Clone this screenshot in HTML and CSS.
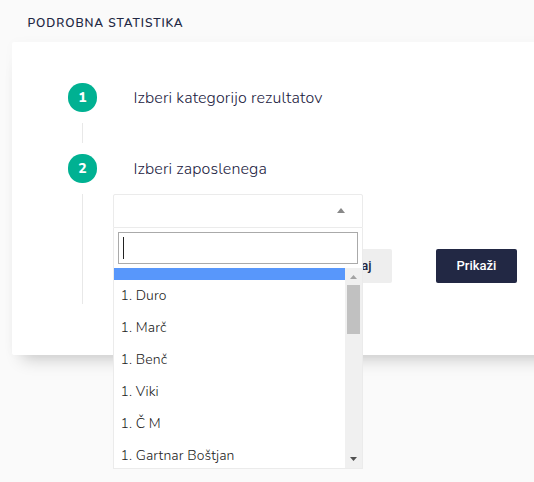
FILE: index.html
```html
<!DOCTYPE html>
<html lang="sl">
<head>
<meta charset="utf-8">
<title>Podrobna statistika</title>
<link rel="stylesheet" href="styles.css">
</head>
<body>
<h1 class="heading">PODROBNA STATISTIKA</h1>
<main class="card">
  <section class="step">
    <div class="rail"><span class="number">1</span><span class="line"></span></div>
    <h2 class="title">Izberi kategorijo rezultatov</h2>
  </section>
  <section class="step step-current">
    <div class="rail"><span class="number">2</span><span class="line"></span></div>
    <div class="content">
      <h2 class="title">Izberi zaposlenega</h2>
      <div class="select">
        <div class="selection"><svg class="arrow" width="8" height="5" viewBox="0 0 8 5"><path d="M4 0 8 5H0z" fill="#888"/></svg></div>
        <div class="dropdown">
          <div class="search"><span class="caret"></span></div>
          <div class="results">
            <ul class="options">
              <li class="option highlighted"></li>
              <li class="option">1. Duro</li>
              <li class="option">1. Marč</li>
              <li class="option">1. Benč</li>
              <li class="option">1. Viki</li>
              <li class="option">1. Č M</li>
              <li class="option">1. Gartnar Boštjan</li>
            </ul>
            <div class="scrollbar">
              <svg class="up" width="7" height="4" viewBox="0 0 7 4"><path d="M3.5 0 7 4H0z" fill="#a3a3a3"/></svg>
              <span class="thumb"></span>
              <svg class="down" width="7" height="4" viewBox="0 0 7 4"><path d="M0 0h7L3.5 4z" fill="#505050"/></svg>
            </div>
          </div>
        </div>
      </div>
      <div class="actions">
        <button class="button back">Nazaj</button>
        <button class="button show">Prikaži</button>
      </div>
    </div>
  </section>
</main>
</body>
</html>
```
FILE: styles.css
```css
* { box-sizing: border-box; }
body {
  margin: 0;
  height: 482px;
  overflow: hidden;
  background: #fafafa;
  color: #222844;
  font-family: "Nunito", "Lato", "Noto Sans", sans-serif;
}
.heading {
  margin: 0;
  height: 42px;
  padding: 15px 0 0 27.5px;
  font-size: 12px;
  line-height: 16px;
  font-weight: 600;
  letter-spacing: .92px;
  white-space: nowrap;
}
.card {
  width: 560px;
  height: 313px;
  margin-left: 12px;
  padding: 41px 0 0 56px;
  background: #fff;
  border-radius: 2px;
  box-shadow: 0 14px 16px -10px rgba(0, 0, 0, .2), 0 0 12px rgba(0, 0, 0, .025);
}
.step { display: flex; height: 71px; }
.step-current { height: 150px; }
.rail {
  width: 29px;
  margin-right: 16px;
  display: flex;
  flex-direction: column;
  align-items: center;
  gap: 11px;
  padding-bottom: 11px;
}
.step-current .rail { padding-bottom: 0; }
.number {
  width: 29px;
  height: 29px;
  flex: none;
  border-radius: 14px;
  background: #00b192;
  color: #fff;
  font-size: 14px;
  line-height: 29px;
  font-weight: 800;
  text-align: center;
}
.line { width: 1px; flex: 1; background: #e8e8e8; }
.title {
  margin: 0;
  height: 40px;
  padding-left: 20.5px;
  color: #1a2040;
  font-size: 16px;
  line-height: 30px;
  font-weight: 350;
  letter-spacing: .13px;
  white-space: nowrap;
}
.select { position: relative; width: 250px; }
.selection {
  height: 34px;
  border: 1px solid #ebebeb;
  border-radius: 2px 2px 0 0;
  background: #fff;
  display: flex;
  justify-content: flex-end;
  align-items: center;
  padding: 0 17px 1px 0;
}
.dropdown {
  position: absolute;
  z-index: 2;
  top: 34px;
  left: 0;
  width: 250px;
  height: 241px;
  padding-top: 4px;
  border: 1px solid #ebebeb;
  border-top: 0;
  background: #fff;
  color: #222;
}
.search {
  height: 32px;
  margin: 0 4px 4px;
  padding: 4px;
  border: 1px solid #aaa;
}
.caret { display: block; width: 1px; height: 22px; background: #222; }
.results { display: flex; height: 200px; }
.options { flex: 1; margin: 0; padding: 0; list-style: none; overflow: hidden; }
.option {
  height: 32px;
  padding-left: 6.5px;
  font-size: 14px;
  line-height: 31px;
  font-weight: 350;
  letter-spacing: .09px;
  white-space: nowrap;
}
.option.highlighted { height: 12px; background: #5897fb; }
.scrollbar {
  width: 17px;
  background: #f0f0f0;
  display: flex;
  flex-direction: column;
  align-items: center;
  padding: 7px 0;
}
.thumb { width: 13px; height: 49px; margin-top: 6px; background: #c1c1c1; }
.down { margin-top: auto; }
.actions { display: flex; justify-content: flex-end; width: 404px; margin-top: 21px; gap: 44px; }
.button {
  width: 81px;
  height: 34px;
  padding: 0;
  border: 0;
  border-radius: 2px;
  font: 500 13px/34px "Roboto", sans-serif;
}
.back { padding-left: 7px; background: #eee; color: #222844; }
.show { background: #222844; color: #fff; }
```
